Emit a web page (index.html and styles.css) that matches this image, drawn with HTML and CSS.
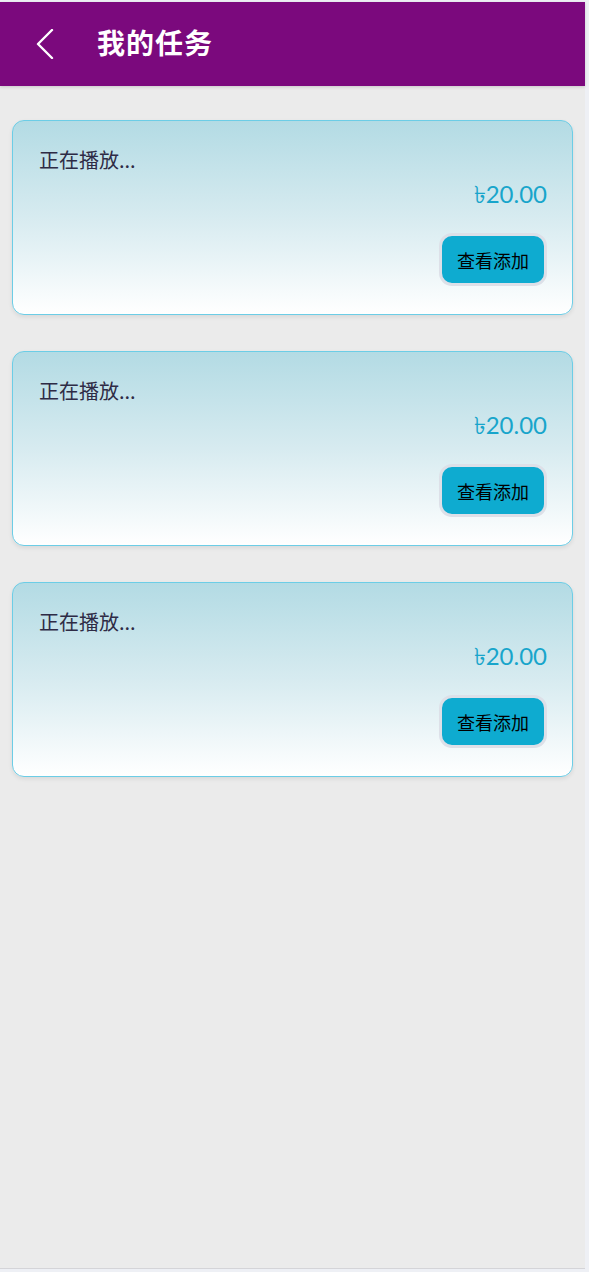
FILE: index.html
```html
<!DOCTYPE html>
<html lang="zh">
<head>
<meta charset="utf-8">
<title>我的任务</title>
<link rel="stylesheet" href="styles.css">
</head>
<body>
<div class="app">
  <header class="topbar">
    <span class="back">
      <svg width="18" height="30" viewBox="0 0 18 30"><path d="M16 1 L2 15 L16 29" fill="none" stroke="#fff" stroke-width="2.4" stroke-linecap="round" stroke-linejoin="round"/></svg>
    </span>
    <h1 class="title">我的任务</h1>
  </header>
  <main class="list">
    <section class="card">
      <div class="card-title">正在播放...</div>
      <div class="price">৳20.00</div>
      <div class="actions"><button class="btn">查看添加</button></div>
    </section>
    <section class="card">
      <div class="card-title">正在播放...</div>
      <div class="price">৳20.00</div>
      <div class="actions"><button class="btn">查看添加</button></div>
    </section>
    <section class="card">
      <div class="card-title">正在播放...</div>
      <div class="price">৳20.00</div>
      <div class="actions"><button class="btn">查看添加</button></div>
    </section>
  </main>
</div>
</body>
</html>
```

FILE: styles.css
```css
html, body {
  margin: 0;
  padding: 0;
}
body {
  background: #eef0f5;
  font-family: "Noto Sans", "Noto Sans CJK SC", sans-serif;
  padding-top: 2px;
}
.app {
  width: 585px;
  height: 1266px;
  background: #ebebeb;
  border-bottom: 1px solid #d4d4d8;
}
.topbar {
  height: 84px;
  background: #7b097d;
  display: flex;
  align-items: center;
  box-shadow: 0 1px 3px rgba(0,0,0,0.15);
}
.back {
  display: flex;
  margin-left: 36px;
  width: 18px;
  height: 30px;
}
.title {
  margin: 0 0 4px 43px;
  color: #fff;
  font-family: "Noto Sans CJK SC", sans-serif;
  font-weight: 700;
  font-size: 28px;
  letter-spacing: 1px;
}
.list {
  padding: 34px 12px 0;
  display: flex;
  flex-direction: column;
  gap: 36px;
}
.card {
  height: 195px;
  box-sizing: border-box;
  border: 1px solid #6ccde6;
  border-radius: 12px;
  background: linear-gradient(180deg, #b3dbe4 0%, #d7ebf0 50%, #ffffff 100%);
  box-shadow: 0 2px 4px rgba(0,0,0,0.08);
  padding: 25px 25px 0 26px;
  display: flex;
  flex-direction: column;
}
.card-title {
  font-family: "Noto Sans CJK SC", serif;
  font-size: 20px;
  line-height: 28px;
  color: #2e2b45;
}
.price {
  text-align: right;
  font-family: "Lato", "Noto Sans", sans-serif;
  font-size: 24px;
  line-height: 30px;
  color: #18a5cb;
  margin-top: 5px;
}
.actions {
  display: flex;
  justify-content: flex-end;
  margin-top: 24px;
}
.btn {
  width: 108px;
  height: 53px;
  box-sizing: border-box;
  border: 3px solid #dde0e8;
  border-radius: 13px;
  background: #0eabd0;
  color: #000;
  font-family: "Noto Sans CJK SC", sans-serif;
  font-size: 18px;
  padding: 0;
}
```
